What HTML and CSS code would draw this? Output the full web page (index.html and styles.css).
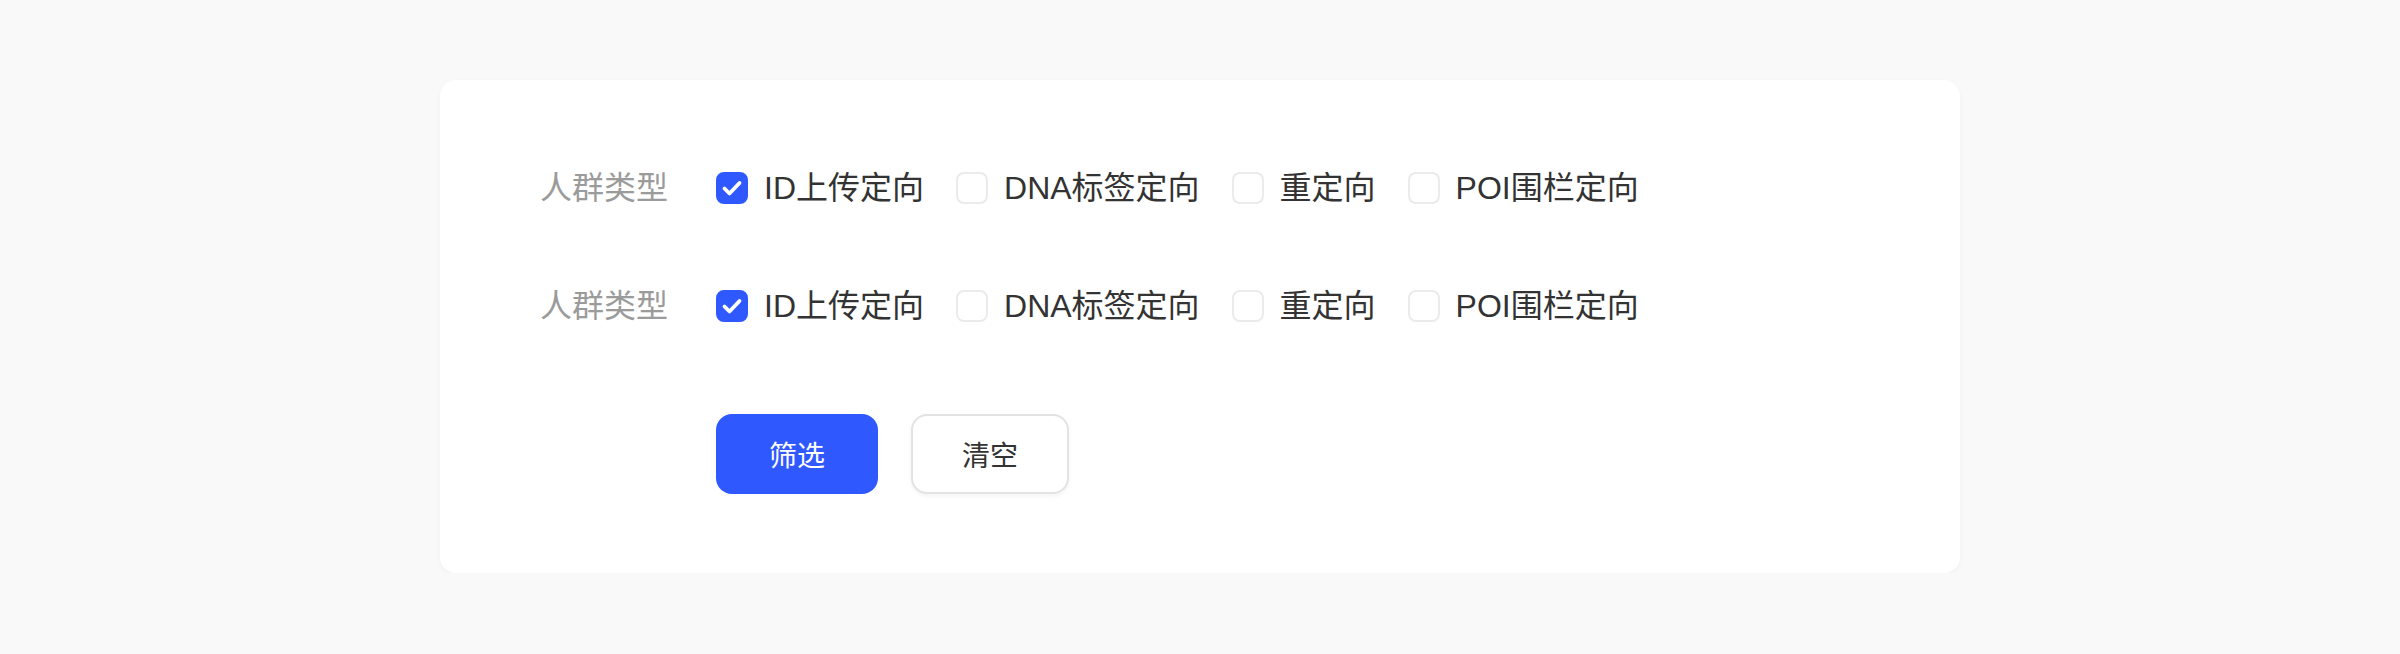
FILE: index.html
```html
<!DOCTYPE html>
<html lang="zh-CN">
<head>
<meta charset="utf-8">
<title>筛选</title>
<link rel="stylesheet" href="styles.css">
</head>
<body>
<div class="page">
  <div class="card">
    <div class="form-row">
      <div class="label">人群类型</div>
      <div class="options">
        <label class="option"><span class="box checked"><svg viewBox="0 0 32 32" width="32" height="32"><path d="M8.5 16.5 L13.5 21.5 L23.5 11" fill="none" stroke="#fff" stroke-width="3.8" stroke-linecap="round" stroke-linejoin="round"/></svg></span><span class="text">ID上传定向</span></label>
        <label class="option"><span class="box"></span><span class="text">DNA标签定向</span></label>
        <label class="option"><span class="box"></span><span class="text">重定向</span></label>
        <label class="option"><span class="box"></span><span class="text">POI围栏定向</span></label>
      </div>
    </div>
    <div class="form-row second">
      <div class="label">人群类型</div>
      <div class="options">
        <label class="option"><span class="box checked"><svg viewBox="0 0 32 32" width="32" height="32"><path d="M8.5 16.5 L13.5 21.5 L23.5 11" fill="none" stroke="#fff" stroke-width="3.8" stroke-linecap="round" stroke-linejoin="round"/></svg></span><span class="text">ID上传定向</span></label>
        <label class="option"><span class="box"></span><span class="text">DNA标签定向</span></label>
        <label class="option"><span class="box"></span><span class="text">重定向</span></label>
        <label class="option"><span class="box"></span><span class="text">POI围栏定向</span></label>
      </div>
    </div>
    <div class="actions">
      <button class="btn primary">筛选</button>
      <button class="btn ghost">清空</button>
    </div>
  </div>
</div>
</body>
</html>
```
FILE: styles.css
```css
html, body {
  margin: 0;
  padding: 0;
  background: #f9f9f9;
}
body {
  font-family: "Liberation Sans", "Noto Sans CJK SC", sans-serif;
  color: #333;
}
.page {
  display: flex;
  justify-content: center;
  padding-top: 80px;
}
.card {
  width: 1520px;
  box-sizing: border-box;
  padding: 84px 100px 79px;
  background: #fff;
  border-radius: 16px;
  box-shadow: 0 2px 6px rgba(0, 0, 0, 0.035);
}
.form-row {
  display: flex;
  align-items: center;
  height: 48px;
  margin-bottom: 70px;
}
.form-row.second {
  margin-bottom: 84px;
}
.label {
  width: 128px;
  margin-right: 48px;
  font-size: 32px;
  line-height: 48px;
  color: #9b9b9b;
  white-space: nowrap;
}
.options {
  display: flex;
  align-items: center;
  gap: 32px;
}
.option {
  display: flex;
  align-items: center;
  gap: 16px;
}
.box {
  width: 32px;
  height: 32px;
  box-sizing: border-box;
  border: 2px solid #ebebeb;
  border-radius: 8px;
  background: #fff;
  display: flex;
  align-items: center;
  justify-content: center;
}
.box.checked {
  background: #2f58ff;
  border-color: #2f58ff;
}
.box svg {
  flex: none;
}
.text {
  font-size: 32px;
  line-height: 48px;
  color: #333;
  white-space: nowrap;
}
.actions {
  display: flex;
  gap: 33px;
  margin-left: 176px;
}
.btn {
  height: 80px;
  border-radius: 16px;
  font-family: "Liberation Sans", "Noto Sans CJK SC", sans-serif;
  font-size: 28px;
  padding: 0;
  cursor: pointer;
}
.btn.primary {
  width: 162px;
  background: #2f58ff;
  border: none;
  color: #fff;
}
.btn.ghost {
  width: 158px;
  background: #fff;
  border: 2px solid #e3e3e3;
  color: #333;
  box-shadow: 0 2px 4px rgba(0, 0, 0, 0.05);
}
```
